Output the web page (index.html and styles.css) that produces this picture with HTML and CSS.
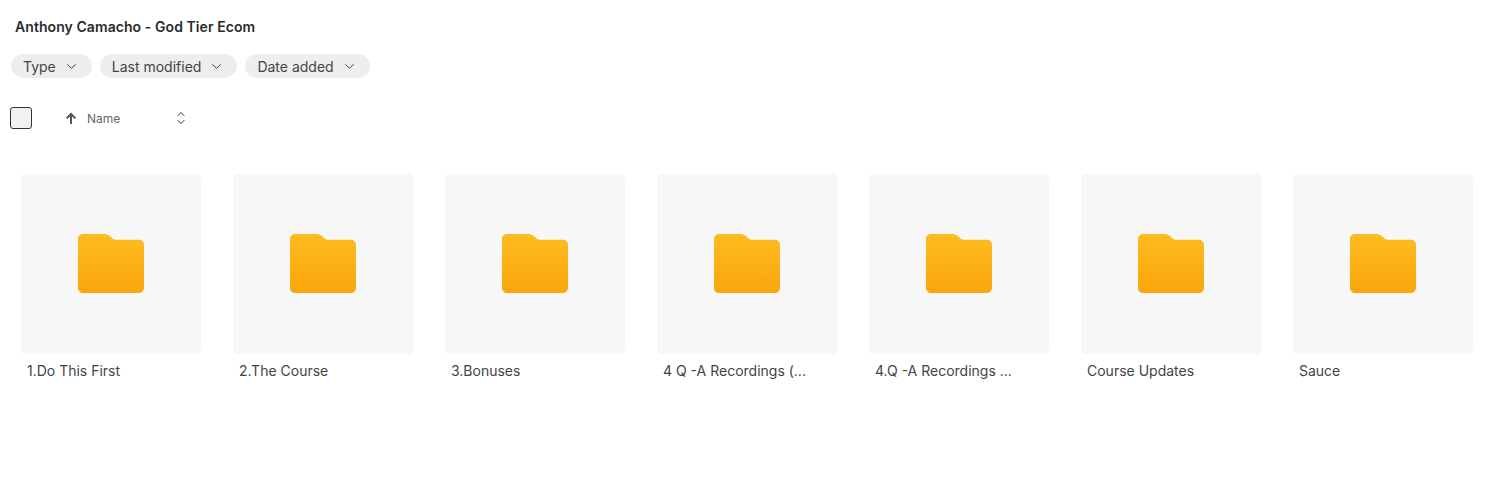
FILE: index.html
```html
<!DOCTYPE html>
<html lang="en">
<head>
<meta charset="UTF-8">
<meta name="viewport" content="width=device-width, initial-scale=1.0">
<title>Anthony Camacho - God Tier Ecom</title>
<link rel="stylesheet" href="styles.css">
</head>
<body>

<svg class="defs" width="0" height="0" aria-hidden="true">
  <defs>
    <linearGradient id="folderFill" x1="0" y1="0" x2="0" y2="1">
      <stop offset="0" stop-color="#fdbc1f"/>
      <stop offset="1" stop-color="#faa50c"/>
    </linearGradient>
    <symbol id="folder" viewBox="0 0 66 59">
      <path fill="url(#folderFill)" d="M5 0H26.5C28.4 0 29.8 .5 31.2 1.6L34.6 4.4C36 5.5 37 5.8 38.6 5.8H61C63.8 5.8 66 8 66 10.8V54C66 56.8 63.8 59 61 59H5C2.2 59 0 56.8 0 54V5C0 2.2 2.2 0 5 0Z"/>
    </symbol>
    <symbol id="chevron" viewBox="0 0 9 5">
      <path d="M.6 .6L4.5 4.3L8.4 .6" fill="none" stroke="#444" stroke-width="1" stroke-linecap="round" stroke-linejoin="round"/>
    </symbol>
  </defs>
</svg>

<h1 class="title">Anthony Camacho - God Tier Ecom</h1>

<div class="filters">
  <button type="button" class="chip">Type <svg class="chevron"><use href="#chevron"/></svg></button>
  <button type="button" class="chip">Last modified <svg class="chevron"><use href="#chevron"/></svg></button>
  <button type="button" class="chip">Date added <svg class="chevron"><use href="#chevron"/></svg></button>
</div>

<div class="sortbar">
  <span class="checkbox"></span>
  <svg class="arrow" viewBox="0 0 12 12"><path d="M6 12V2.5M1.6 6.4L6 2L10.4 6.4" fill="none" stroke="#555" stroke-width="2"/></svg>
  <span class="sort-name">Name</span>
  <svg class="updown" viewBox="0 0 8 14"><path d="M1 4.5L4 1.5L7 4.5M1 9.5L4 12.5L7 9.5" fill="none" stroke="#333" stroke-width="1" stroke-linecap="round" stroke-linejoin="round"/></svg>
</div>

<div class="grid">
  <div class="item">
    <div class="thumb"><svg class="folder"><use href="#folder"/></svg></div>
    <div class="item-name">1.Do This First</div>
  </div>
  <div class="item">
    <div class="thumb"><svg class="folder"><use href="#folder"/></svg></div>
    <div class="item-name">2.The Course</div>
  </div>
  <div class="item">
    <div class="thumb"><svg class="folder"><use href="#folder"/></svg></div>
    <div class="item-name">3.Bonuses</div>
  </div>
  <div class="item">
    <div class="thumb"><svg class="folder"><use href="#folder"/></svg></div>
    <div class="item-name">4 Q -A Recordings (...</div>
  </div>
  <div class="item">
    <div class="thumb"><svg class="folder"><use href="#folder"/></svg></div>
    <div class="item-name">4.Q -A Recordings ...</div>
  </div>
  <div class="item">
    <div class="thumb"><svg class="folder"><use href="#folder"/></svg></div>
    <div class="item-name">Course Updates</div>
  </div>
  <div class="item">
    <div class="thumb"><svg class="folder"><use href="#folder"/></svg></div>
    <div class="item-name">Sauce</div>
  </div>
</div>

</body>
</html>
```

FILE: styles.css
```css
body {
  font-family: Inter, "Liberation Sans", sans-serif;
  background-color: #fff;
  color: #333;
  margin: 0;
  padding: 0;
}

.defs {
  display: block;
  height: 0;
}

.title {
  margin: 0;
  padding: 19px 0 0 15px;
  font-size: 14px;
  line-height: 16px;
  font-weight: 600;
  letter-spacing: 0.07px;
  color: #2b2b2b;
}

.filters {
  display: flex;
  gap: 8px;
  padding: 19px 0 0 11px;
}

.chip {
  display: flex;
  align-items: center;
  gap: 11px;
  height: 24px;
  padding: 0 16px 0 12px;
  border: none;
  border-radius: 12px;
  background-color: #eee;
  font-family: inherit;
  font-size: 14px;
  color: #444;
}

.chevron {
  width: 9px;
  height: 5px;
}

.sortbar {
  display: flex;
  align-items: center;
  height: 22px;
  padding: 29px 0 0 10px;
}

.checkbox {
  width: 20px;
  height: 20px;
  border: 1px solid #333;
  border-radius: 3px;
  background-color: #f1f1f1;
}

.arrow {
  width: 12px;
  height: 12px;
  margin-left: 33px;
}

.sort-name {
  width: 90px;
  margin-left: 10px;
  font-size: 12px;
  color: #666;
}

.updown {
  width: 8px;
  height: 14px;
}

.grid {
  display: flex;
  gap: 32px;
  padding: 45px 0 0 21px;
}

.item {
  width: 180px;
}

.thumb {
  display: flex;
  align-items: center;
  justify-content: center;
  height: 180px;
  border-radius: 4px;
  background-color: #f7f7f7;
}

.folder {
  width: 66px;
  height: 59px;
  margin-bottom: 1px;
}

.item-name {
  padding: 8px 6px 0;
  font-size: 14px;
  line-height: 17px;
  color: #444;
  white-space: nowrap;
}
```
